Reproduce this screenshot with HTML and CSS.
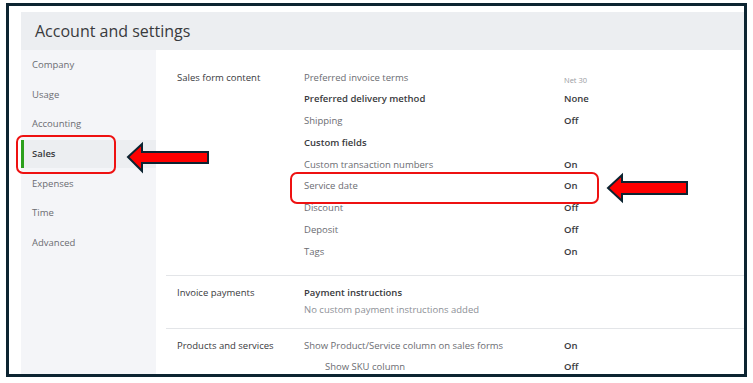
FILE: index.html
```html
<!DOCTYPE html>
<html lang="en">
<head>
  <meta charset="UTF-8">
  <title>Account and settings</title>
  <link rel="stylesheet" href="styles.css">
</head>
<body>
  <div class="frame">
    <div class="top-bar">Account and settings</div>
    <div class="main-area">
      <div class="side-nav">
        <div class="nav-item">Company</div>
        <div class="nav-item">Usage</div>
        <div class="nav-item">Accounting</div>
        <div class="nav-item active">Sales</div>
        <div class="nav-item">Expenses</div>
        <div class="nav-item">Time</div>
        <div class="nav-item">Advanced</div>
      </div>
      <div class="content">
        <div class="section first">
          <div class="sec-label">Sales form content</div>
          <div class="sec-rows">
            <div class="row"><span class="name">Preferred invoice terms</span><span class="val faint">Net 30</span></div>
            <div class="row"><span class="name strong">Preferred delivery method</span><span class="val">None</span></div>
            <div class="row"><span class="name">Shipping</span><span class="val">Off</span></div>
            <div class="row"><span class="name strong">Custom fields</span><span class="val"></span></div>
            <div class="row"><span class="name">Custom transaction numbers</span><span class="val">On</span></div>
            <div class="row"><span class="name">Service date</span><span class="val">On</span></div>
            <div class="row"><span class="name">Discount</span><span class="val">Off</span></div>
            <div class="row"><span class="name">Deposit</span><span class="val">Off</span></div>
            <div class="row"><span class="name">Tags</span><span class="val">On</span></div>
          </div>
        </div>
        <div class="section second">
          <div class="sec-label">Invoice payments</div>
          <div class="sec-rows">
            <div class="row"><span class="name strong">Payment instructions</span></div>
            <div class="note">No custom payment instructions added</div>
          </div>
        </div>
        <div class="section third">
          <div class="sec-label">Products and services</div>
          <div class="sec-rows">
            <div class="row"><span class="name">Show Product/Service column on sales forms</span><span class="val">On</span></div>
            <div class="row"><span class="name sub">Show SKU column</span><span class="val">Off</span></div>
          </div>
        </div>
      </div>
    </div>
  </div>

  <!-- annotation layer -->
  <svg class="marks" width="753" height="383" viewBox="0 0 753 383">
    <rect x="17" y="136" width="98" height="37" rx="6" class="box"/>
    <rect x="291" y="173" width="307" height="30" rx="6" class="box"/>
    <polygon class="arrow" points="128,157 142,144 142,152 208,152 208,163 142,163 142,171"/>
    <polygon class="arrow" points="608,188 622,175 622,182 687,182 687,194 622,194 622,201"/>
  </svg>
</body>
</html>
```

FILE: styles.css
```css
body {
  margin: 0;
  background: white;
  font-family: 'Open Sans', sans-serif;
  color: #393a3d;
}

.frame {
  position: relative;
  width: 741px;
  height: 374px;
  margin: 3px 0 0 6px;
  border: 3px solid #0c2431;
  padding: 6px 0 0 12px;
  box-sizing: border-box;
  display: flex;
  flex-direction: column;
  overflow: hidden;
}

.top-bar {
  height: 38px;
  background: #eceef1;
  font-size: 16px;
  line-height: 38px;
  padding-left: 14px;
  color: #393a3d;
  flex-shrink: 0;
}

.main-area {
  flex: 1;
  display: flex;
}

.side-nav {
  width: 135px;
  background: #f4f5f8;
  flex-shrink: 0;
}

.nav-item {
  height: 29.7px;
  line-height: 29.7px;
  padding-left: 11px;
  font-size: 9.5px;
  color: #6b6c72;
}

.nav-item.active {
  background: #eceef1;
  color: #393a3d;
  font-weight: 600;
  border-left: 3px solid #2ca01c;
  padding-left: 8px;
  height: 28px;
  line-height: 28px;
  margin: 1px 0 0.7px;
}

.content {
  flex: 1;
  padding-left: 10px;
  background: white;
}

.section {
  display: flex;
  padding-left: 11px;
  border-bottom: 1px solid #e3e5e8;
}

.section.first {
  padding-top: 16.5px;
  padding-bottom: 12.5px;
}

.section.second {
  padding-top: 6px;
  padding-bottom: 12px;
}

.section.third {
  padding-top: 6.5px;
  border-bottom: none;
}

.sec-label {
  width: 127px;
  flex-shrink: 0;
  font-size: 9.5px;
  line-height: 21.8px;
  color: #393a3d;
}

.sec-rows {
  flex: 1;
}

.row {
  display: flex;
  height: 21.8px;
  line-height: 21.8px;
  font-size: 9.5px;
}

.third .row {
  height: 21px;
  line-height: 21px;
}

.name {
  width: 260px;
  color: #6b6c72;
}

.name.strong {
  color: #393a3d;
  font-weight: 600;
}

.name.sub {
  padding-left: 21px;
  width: 239px;
}

.val {
  font-weight: 600;
  color: #393a3d;
}

.val.faint {
  font-size: 7.5px;
  font-weight: 400;
  color: #9a9ca1;
  padding-top: 3px;
}

.note {
  font-size: 9.5px;
  line-height: 12px;
  color: #8d9096;
}

.marks {
  position: absolute;
  left: 0;
  top: 0;
  pointer-events: none;
}

.box {
  fill: none;
  stroke: #ee1111;
  stroke-width: 2;
}

.arrow {
  fill: #ff0000;
  stroke: #0c2431;
  stroke-width: 2;
  stroke-linejoin: miter;
}
```
